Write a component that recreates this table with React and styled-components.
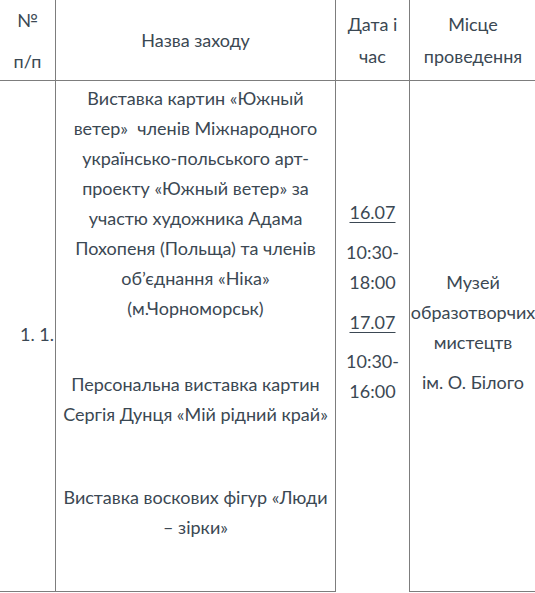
import React from "react";
import styled, { createGlobalStyle } from "styled-components";

const GlobalStyle = createGlobalStyle`
  html, body {
    margin: 0;
    padding: 0;
    background: #fff;
    overflow: hidden;
  }
  body {
    font-family: Lato, "Open Sans", sans-serif;
    font-size: 18px;
    color: #3b4853;
  }
`;

const Table = styled.div`
  display: grid;
  grid-template-columns: 56px 280px 74px 126px;
  grid-template-rows: 81px 511px;
  width: 536px;
`;

const Cell = styled.div`
  box-sizing: border-box;
  border-right: ${(p) => (p.$last ? "none" : "1px solid #7d7d7d")};
  border-bottom: ${(p) => (p.$open ? "none" : "1px solid #7d7d7d")};
  display: flex;
  flex-direction: column;
  align-items: center;
  justify-content: ${(p) => p.$justify || "center"};
  padding-top: ${(p) => p.$top || 0}px;
  text-align: center;
  line-height: ${(p) => p.$lh || 30}px;
  white-space: nowrap;
`;

const Para = styled.p`
  margin: 0;
  margin-top: ${(p) => p.$gap || 0}px;
`;

const DateLink = styled.span`
  text-decoration: underline;
  text-underline-offset: 3px;
  text-decoration-thickness: 1px;
`;

const Num = styled.div`
  align-self: flex-start;
  padding-left: 20px;
  margin-top: -4px;
`;

const Events = styled.div`
  width: 100%;
`;

export default function App() {
  return (
    <>
      <GlobalStyle />
      <Table>
        <Cell>
          <Para>№</Para>
          <Para $gap={11}>п/п</Para>
        </Cell>
        <Cell>Назва заходу</Cell>
        <Cell $lh={32}>
          Дата і<br />
          час
        </Cell>
        <Cell $lh={32} $last>
          Місце<br />
          проведення
        </Cell>

        <Cell>
          <Num>1. 1.</Num>
        </Cell>
        <Cell $justify="flex-start" $top={2}>
          <Events>
            <Para>
              Виставка картин «Южный
              <br />
              ветер»&nbsp; членів Міжнародного
              <br />
              українсько-польського арт-
              <br />
              проекту «Южный ветер» за
              <br />
              участю художника Адама
              <br />
              Похопеня (Польща) та членів
              <br />
              об’єднання «Ніка»
              <br />
              (м.Чорноморськ)
            </Para>
            <Para $gap={46}>
              Персональна виставка картин
              <br />
              Сергія Дунця «Мій рідний край»
            </Para>
            <Para $gap={53}>
              Виставка воскових фігур «Люди
              <br />– зірки»
            </Para>
          </Events>
        </Cell>
        <Cell $justify="flex-start" $top={116} $open>
          <Para>
            <DateLink>16.07</DateLink>
          </Para>
          <Para $gap={10}>
            10:30-
            <br />
            18:00
          </Para>
          <Para $gap={10}>
            <DateLink>17.07</DateLink>
          </Para>
          <Para $gap={9}>
            10:30-
            <br />
            16:00
          </Para>
        </Cell>
        <Cell $last style={{ paddingBottom: 8 }}>
          <Para>
            Музей
            <br />
            образотворчих
            <br />
            мистецтв
          </Para>
          <Para $gap={10}>ім. О. Білого</Para>
        </Cell>
      </Table>
    </>
  );
}
